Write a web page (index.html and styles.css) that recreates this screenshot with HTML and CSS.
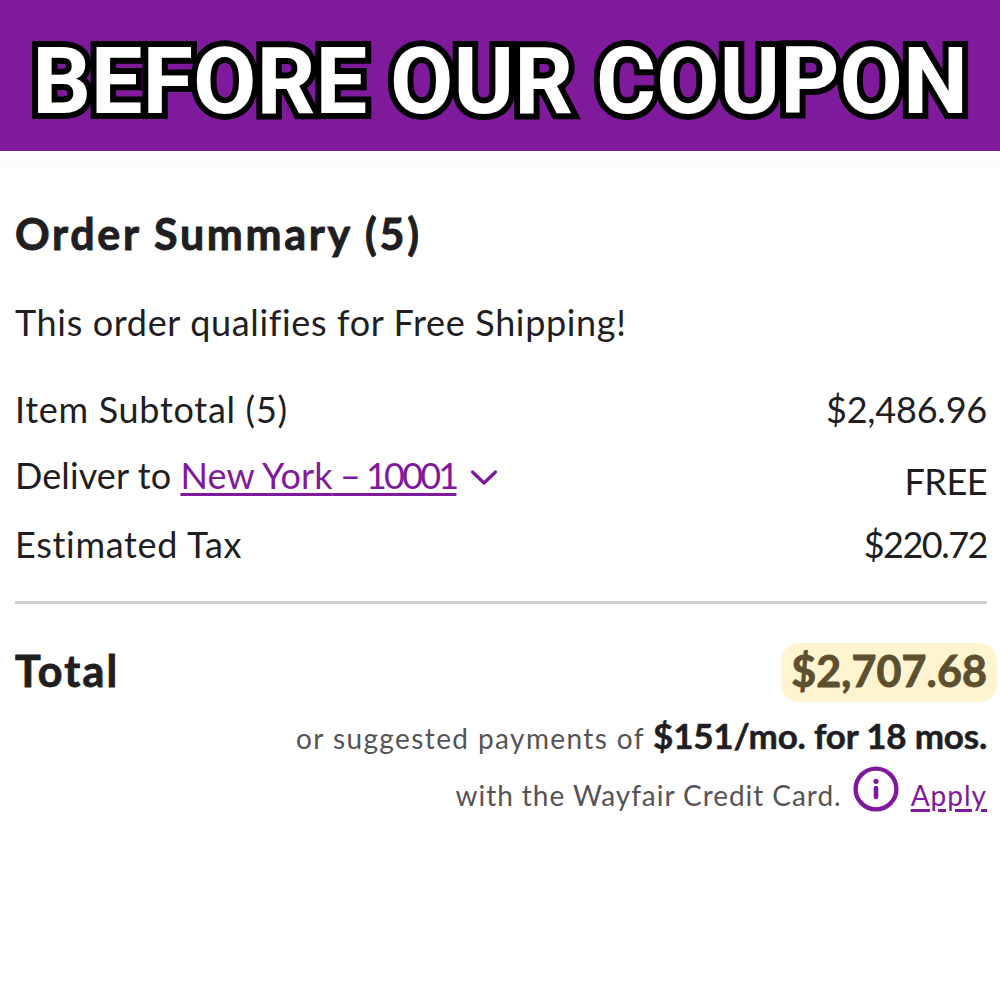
FILE: index.html
```
<!DOCTYPE html>
<html lang="en">
<head>
    <meta charset="UTF-8">
    <meta name="viewport" content="width=device-width, initial-scale=1.0">
    <title>Before Our Coupon</title>
    <link rel="stylesheet" href="styles.css">
</head>
<body>
    <header class="banner">
        <h1>BEFORE OUR COUPON</h1>
    </header>

    <main class="summary">
        <h2>Order Summary (5)</h2>
        <p class="shipping">This order qualifies for Free Shipping!</p>

        <div class="row subtotal">
            <span class="label">Item Subtotal (5)</span>
            <span class="price">$2,486.96</span>
        </div>
        <div class="row deliver">
            <span>Deliver to <a href="#" class="location">New York<span class="dash"> – </span><span class="zip">10001</span></a>
                <svg class="chevron" width="28" height="18" viewBox="0 0 28 18">
                    <path d="M2.5 3 L14 14 L25.5 3" fill="none" stroke="#7f1a9d" stroke-width="3.4" stroke-linecap="round" stroke-linejoin="round"/>
                </svg>
            </span>
            <span class="free">FREE</span>
        </div>
        <div class="row tax">
            <span class="label">Estimated Tax</span>
            <span class="tax-price">$220.72</span>
        </div>

        <div class="row total">
            <span class="total-label">Total</span>
            <span class="highlight">$2,707.68</span>
        </div>

        <div class="payments">
            <span class="suggest">or suggested payments of</span>
            <strong>$151/mo. for 18 mos.</strong>
        </div>
        <div class="card-line">
            <span class="card">with the Wayfair Credit Card.</span>
            <svg class="info" width="46" height="46" viewBox="0 0 46 46">
                <circle cx="23" cy="23" r="20.4" fill="none" stroke="#7f1a9d" stroke-width="4.4"/>
                <circle cx="23" cy="15.3" r="2.6" fill="#7f1a9d"/>
                <path d="M23 22 V31" stroke="#7f1a9d" stroke-width="4.6" stroke-linecap="round"/>
            </svg>
            <a href="#" class="apply">Apply</a>
        </div>
    </main>
</body>
</html>
```
FILE: styles.css
```
* {
    box-sizing: border-box;
}
body {
    margin: 0;
    background: #fff;
    color: #211e22;
    font-family: Lato, "Liberation Sans", sans-serif;
    font-size: 36px;
    line-height: 44px;
}
a {
    color: #7f1a9d;
}
.banner {
    height: 151px;
    background: #7f1a9d;
    text-align: center;
}
.banner h1 {
    margin: 0;
    padding-top: 6px;
    font-family: Roboto, "Liberation Sans", sans-serif;
    font-size: 92px;
    font-weight: 700;
    line-height: 151px;
    white-space: nowrap;
    color: #fff;
    -webkit-text-stroke: 12px #000;
    paint-order: stroke fill;
}
.summary {
    padding: 16px 13px 0 15px;
    background: linear-gradient(#fff, #fafafa 16px, #fff 17px);
    white-space: nowrap;
}
h2 {
    margin: 0;
    padding-top: 42px;
    font-size: 43px;
    line-height: 50px;
    letter-spacing: 2.7px;
    -webkit-text-stroke: 0.9px;
}
.shipping {
    margin: 41px 0 43px;
    letter-spacing: 0.65px;
}
.label {
    letter-spacing: 0.7px;
}
.price {
    letter-spacing: -0.2px;
}
.row {
    display: flex;
    justify-content: space-between;
}
.deliver {
    margin-top: 22px;
    letter-spacing: 0.1px;
}
.location {
    text-decoration-thickness: 3px;
    text-underline-offset: 4px;
    text-decoration-skip-ink: none;
}
.dash {
    letter-spacing: -2px;
}
.zip {
    letter-spacing: -2.8px;
}
.chevron {
    margin: 0 0 2px 4px;
}
.free {
    margin-top: 6px;
    letter-spacing: -0.5px;
}
.tax {
    margin-top: 19px;
    padding-bottom: 35px;
    border-bottom: 3px solid #d0cfd3;
}
.tax-price {
    letter-spacing: -1.5px;
}
.total {
    margin-top: 39px;
    font-size: 43px;
    font-weight: 700;
    line-height: 53px;
    -webkit-text-stroke: 0.9px;
}
.total-label {
    padding-top: 1px;
    letter-spacing: 2.2px;
}
.highlight {
    margin-right: -10px;
    padding: 1px 10px 5px;
    border-radius: 18px;
    background: #fff4d0;
    color: #5d5030;
    letter-spacing: 0.1px;
}
.payments {
    display: flex;
    justify-content: flex-end;
    align-items: baseline;
    gap: 8px;
    margin-top: 11px;
}
.payments strong {
    font-size: 35px;
    letter-spacing: -0.2px;
    -webkit-text-stroke: 0.5px;
}
.suggest,
.card {
    font-size: 28px;
    color: #555358;
}
.suggest {
    letter-spacing: 1.4px;
}
.card {
    letter-spacing: 0.95px;
}
.card-line {
    display: flex;
    justify-content: flex-end;
    margin-top: 13px;
}
.info {
    margin: -7px 12px 0 11px;
}
.apply {
    font-size: 28px;
    letter-spacing: 1px;
    text-decoration-thickness: 3px;
    text-underline-offset: 3px;
}
```
